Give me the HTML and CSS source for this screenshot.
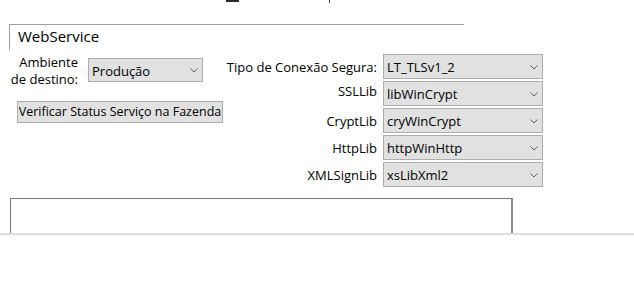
FILE: index.html
```html
<!DOCTYPE html>
<html lang="pt-BR">
<head>
    <meta charset="UTF-8">
    <title>WebService</title>
    <link rel="stylesheet" href="styles.css">
</head>
<body>
    <div class="window">
        <div class="titlebar">
            <span class="mark-dash"></span>
            <span class="mark-tick"></span>
        </div>

        <div class="tab">WebService</div>

        <div class="form">
            <div class="left">
                <div class="env-row">
                    <div class="env-label">Ambiente<br>de destino:</div>
                    <div class="combo combo-env">
                        <span>Produção</span>
                        <svg class="chevron" width="8" height="5" viewBox="0 0 8 5"><path d="M0.5 0.5 L4 4 L7.5 0.5" fill="none" stroke="#606060" stroke-width="1"/></svg>
                    </div>
                </div>
                <button class="btn">Verificar Status Serviço na Fazenda</button>
            </div>

            <div class="right">
                <label class="lbl">Tipo de Conexão Segura:</label>
                <div class="combo">
                    <span>LT_TLSv1_2</span>
                    <svg class="chevron" width="8" height="5" viewBox="0 0 8 5"><path d="M0.5 0.5 L4 4 L7.5 0.5" fill="none" stroke="#606060" stroke-width="1"/></svg>
                </div>

                <label class="lbl lbl-up">SSLLib</label>
                <div class="combo">
                    <span>libWinCrypt</span>
                    <svg class="chevron" width="8" height="5" viewBox="0 0 8 5"><path d="M0.5 0.5 L4 4 L7.5 0.5" fill="none" stroke="#606060" stroke-width="1"/></svg>
                </div>

                <label class="lbl">CryptLib</label>
                <div class="combo">
                    <span>cryWinCrypt</span>
                    <svg class="chevron" width="8" height="5" viewBox="0 0 8 5"><path d="M0.5 0.5 L4 4 L7.5 0.5" fill="none" stroke="#606060" stroke-width="1"/></svg>
                </div>

                <label class="lbl">HttpLib</label>
                <div class="combo">
                    <span>httpWinHttp</span>
                    <svg class="chevron" width="8" height="5" viewBox="0 0 8 5"><path d="M0.5 0.5 L4 4 L7.5 0.5" fill="none" stroke="#606060" stroke-width="1"/></svg>
                </div>

                <label class="lbl">XMLSignLib</label>
                <div class="combo">
                    <span>xsLibXml2</span>
                    <svg class="chevron" width="8" height="5" viewBox="0 0 8 5"><path d="M0.5 0.5 L4 4 L7.5 0.5" fill="none" stroke="#606060" stroke-width="1"/></svg>
                </div>
            </div>
        </div>

        <div class="output"></div>
    </div>
    <div class="divider"></div>
</body>
</html>
```

FILE: styles.css
```css
body {
    margin: 0;
    background: #ffffff;
    font-family: "Open Sans", "Noto Sans", sans-serif;
    font-size: 13px;
    color: #000000;
}

.window {
    height: 233px;
    overflow: hidden;
}

.titlebar {
    height: 24px;
    display: flex;
    align-items: flex-start;
}

.mark-dash {
    margin-left: 226px;
    width: 13px;
    height: 2px;
    background: #2b2b2b;
}

.mark-tick {
    margin-left: 90px;
    width: 1px;
    height: 3px;
    background: #5a2a4a;
}

.tab {
    margin-left: 9px;
    width: 455px;
    height: 26px;
    border-top: 1px solid #a0a0a0;
    border-left: 1px solid #a0a0a0;
    padding-left: 8px;
    box-sizing: border-box;
    font-size: 15px;
    line-height: 23px;
}

.form {
    display: flex;
    padding-top: 4px;
}

.left {
    width: 225px;
    padding-left: 6px;
    box-sizing: border-box;
}

.env-row {
    display: flex;
    align-items: flex-start;
}

.env-label {
    width: 72px;
    text-align: right;
    line-height: 17px;
}

.combo {
    height: 25px;
    box-sizing: border-box;
    border: 1px solid #adadad;
    background: #e1e1e1;
    display: flex;
    align-items: center;
    justify-content: space-between;
    padding: 1px 4px 0 3px;
}

.combo-env {
    margin-left: 10px;
    margin-top: 4px;
    width: 115px;
    height: 24px;
}

.chevron {
    flex: none;
}

.btn {
    display: block;
    margin: 13px 0 0 11px;
    width: 206px;
    height: 22px;
    padding: 0 0 1px 0;
    border: 1px solid #adadad;
    background: #e1e1e1;
    font-family: inherit;
    font-size: 12.5px;
    color: #000000;
    white-space: nowrap;
}

.right {
    display: grid;
    grid-template-columns: 152px 160px;
    grid-auto-rows: 25px;
    column-gap: 6px;
    row-gap: 2px;
    align-items: center;
}

.lbl {
    text-align: right;
    white-space: nowrap;
}

.lbl-up {
    padding-bottom: 6px;
}

.output {
    margin: 11px 0 0 10px;
    width: 503px;
    height: 60px;
    box-sizing: border-box;
    border-top: 1px solid #7a7a7a;
    border-left: 1px solid #7a7a7a;
    border-right: 2px solid #8a8a8a;
}

.divider {
    height: 2px;
    background: #dedede;
}
```
